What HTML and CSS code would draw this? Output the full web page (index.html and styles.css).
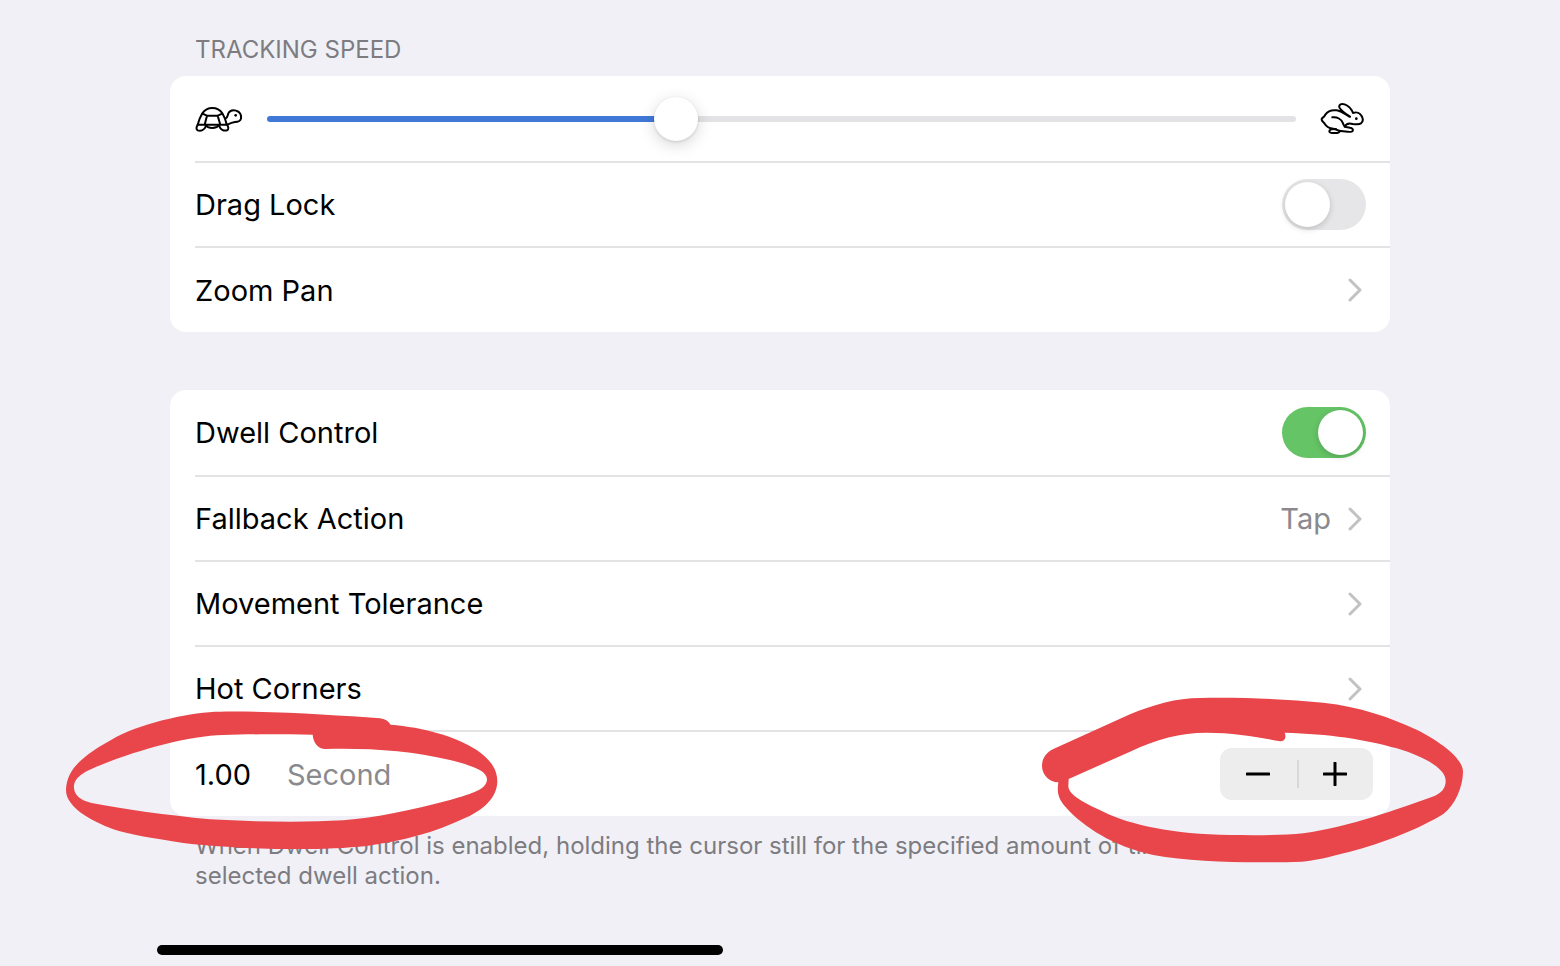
FILE: index.html
```html
<!DOCTYPE html>
<html lang="en">
<head>
    <meta charset="UTF-8" />
    <title>Tracking Speed</title>
    <link rel="stylesheet" href="styles.css">
</head>
<body>
<div id="settings">
    <h2>TRACKING SPEED</h2>
    <div class="group">
        <div class="row speed">
            <svg class="turtle" viewBox="48 45 144 84" aria-hidden="true">
                <path d="M56 104C60 90 64 80 70 70C78 58 88 54 100 54C113 54 123 59 130 70C136 80 140 90 143 103M60 104L140 104M70 71L84 77L116 77L130 71M84 77L77 104M116 77L124 104M77 104C84 112 92 114 100 114C110 114 117 111 124 104"/>
                <path d="M139 86C147 82 146 76 148 70C152 62 162 59 172 62C183 65 188 76 186 86C184 95 176 96 168 96C160 97 153 100 145 104"/>
                <path d="M57 103C51 112 51 118 56 121C66 124 76 120 80 110M122 110C124 118 134 124 144 121C150 118 149 110 143 104"/>
                <circle class="eye" cx="170" cy="76" r="4"/>
            </svg>
            <input type="range" min="0" max="1000" value="393" aria-label="Tracking speed">
            <svg class="rabbit" viewBox="60 38 132 99" aria-hidden="true">
                <path d="M150 82C138 74 122 62 118 54C116 45 124 42 134 45C147 50 155 60 159 71C170 67 180 71 184 79C190 88 189 97 183 102C176 107 166 104 158 104C148 101 138 104 134 112L150 115C157 116 160 120 158 125C156 128 150 128 144 127L122 125C112 124 108 120 100 118C88 117 78 110 74 103C70 98 64 96 65 89C67 84 73 84 76 76C84 64 96 61 110 63C124 65 134 74 148 82"/>
                <path d="M97 84C112 82 124 90 128 100C130 106 132 109 134 111M108 119C96 119 88 121 88 126C89 133 104 131 112 131C116 130 118 128 121 125"/>
                <circle class="eye" cx="169" cy="88" r="4"/>
            </svg>
        </div>
        <div class="row">
            <label for="drag">Drag Lock</label>
            <input type="checkbox" class="switch" id="drag">
        </div>
        <a class="row" href="#">
            <span>Zoom Pan</span>
            <svg class="arrow" viewBox="0 0 14 24"><path d="M2 2L12 12L2 22"/></svg>
        </a>
    </div>

    <div class="group">
        <div class="row">
            <label for="dwell">Dwell Control</label>
            <input type="checkbox" class="switch" id="dwell" checked>
        </div>
        <a class="row" href="#">
            <span>Fallback Action</span>
            <span class="value">Tap</span>
            <svg class="arrow" viewBox="0 0 14 24"><path d="M2 2L12 12L2 22"/></svg>
        </a>
        <a class="row" href="#">
            <span>Movement Tolerance</span>
            <svg class="arrow" viewBox="0 0 14 24"><path d="M2 2L12 12L2 22"/></svg>
        </a>
        <a class="row" href="#">
            <span>Hot Corners</span>
            <svg class="arrow" viewBox="0 0 14 24"><path d="M2 2L12 12L2 22"/></svg>
        </a>
        <div class="row seconds">
            <input type="text" class="time" id="time" value="1.00">
            <label class="unit" for="time">Second</label>
            <div class="stepper">
                <button type="button" aria-label="Less"><svg viewBox="0 0 24 24"><path d="M1 12H23"/></svg></button>
                <button type="button" aria-label="More"><svg viewBox="0 0 24 24"><path d="M1 12H23M12 1V23"/></svg></button>
            </div>
            <!-- red marker rings -->
            <svg class="ring ring_l" viewBox="30 45 1350 450" aria-hidden="true">
                <path d="M48 300C50 235 100 195 200 140C290 95 430 65 510 65C680 63 860 76 990 85Q1012 88 1022 104C1120 112 1215 138 1280 180C1325 212 1342 240 1342 275C1340 325 1300 358 1250 382C1150 430 1060 452 950 468C800 484 560 478 400 459C310 445 240 435 190 418C120 390 80 365 60 335Q48 320 48 300Z
                M72 292C72 262 100 245 160 222C270 178 420 137 520 135C600 132 700 133 788 134C790 160 805 176 826 177C960 174 1080 182 1200 210C1280 230 1310 245 1311 268C1310 298 1270 310 1200 330C1080 362 980 382 880 391C760 398 600 395 480 388C350 375 220 358 125 339C90 332 72 314 72 292Z"/>
            </svg>
            <svg class="ring ring_r" viewBox="15 39 1350 525" aria-hidden="true">
                <path d="M36 258C36 235 48 218 70 207L300 103C370 74 440 54 510 54C640 52 760 57 880 68C990 80 1080 112 1160 149C1230 184 1299 235 1299 275C1299 320 1275 375 1240 402C1170 445 1060 490 960 515C900 530 850 543 815 545C680 549 500 549 370 525C250 500 160 440 110 385C82 355 81 335 85 307C58 307 36 285 36 258Z
                M116 297L300 215C380 177 450 158 530 158C610 158 690 172 750 184C764 184 770 172 764 158C900 162 1000 177 1100 205C1190 232 1247 268 1247 302C1247 325 1235 340 1205 351C1110 385 960 440 820 460C760 466 680 466 600 465C430 462 300 435 220 395C165 370 115 345 115 318Z"/>
            </svg>
        </div>
    </div>
    <p class="note">When Dwell Control is enabled, holding the cursor still for the specified amount of time performs the selected dwell action.</p>
</div>
<div class="home"></div>
</body>
</html>
```

FILE: styles.css
```css
*{
    box-sizing:border-box;
}
body{
    margin:0;
    background:#f1f0f6;
    color:#000;
    font-family:Inter,"Liberation Sans",sans-serif;
    font-size:29px;
    overflow-x:hidden;
}
#settings{
    max-width:1220px;
    margin:0 auto;
    padding-top:35px;
}
h2{
    margin:0 25px 11px;
    font-size:24px;
    line-height:30px;
    font-weight:400;
    color:#7c7c81;
}
.group{
    margin-bottom:58px;
    background:#fff;
    border-radius:16px;
}
.row{
    display:flex;
    align-items:center;
    height:85px;
    margin-left:25px;
    padding-right:24px;
    color:#000;
    text-decoration:none;
}
.row + .row{
    border-top:2px solid #e3e3e5;
}
.row:last-child{
    height:86px;
}
a.row{
    padding-right:28px;
}

.speed{
    padding-right:26px;
}
.speed svg{
    flex:none;
    fill:none;
    stroke:#000;
    stroke-width:6;
    stroke-linecap:round;
    stroke-linejoin:round;
}
.speed .eye{
    fill:#000;
    stroke:none;
}
.turtle{
    width:48px;
    height:28px;
}
.rabbit{
    width:44px;
    height:33px;
}
input[type=range]{
    appearance:none;
    flex:1;
    min-width:0;
    height:46px;
    margin:0 24px;
    background:none;
}
input[type=range]::-webkit-slider-runnable-track{
    height:6px;
    border-radius:3px;
    background:linear-gradient(to right,#4078d8 40%,#e3e3e5 40%);
}
input[type=range]::-webkit-slider-thumb{
    appearance:none;
    width:44px;
    height:44px;
    margin-top:-19px;
    border-radius:50%;
    background:#fff;
    box-shadow:0 1px 3px rgba(0,0,0,.12),0 4px 16px rgba(0,0,0,.16);
}

.switch{
    appearance:none;
    width:84px;
    height:51px;
    margin:0 0 0 auto;
    padding:3px;
    border-radius:26px;
    background:#e6e6e8;
}
.switch:before{
    content:"";
    display:block;
    width:45px;
    height:45px;
    border-radius:50%;
    background:#fff;
    box-shadow:0 2px 6px rgba(0,0,0,.18);
}
.switch:checked{
    background:#65c466;
}
.switch:checked:before{
    margin-left:auto;
}

.arrow{
    width:14px;
    height:24px;
    margin-left:auto;
    fill:none;
    stroke:#c2c2c5;
    stroke-width:3;
    stroke-linecap:round;
    stroke-linejoin:round;
}
.value{
    margin-left:auto;
    color:#8a8a8e;
}
.value + .arrow{
    margin-left:17px;
}

.seconds{
    position:relative;
    padding-right:17px;
}
.time{
    width:92px;
    padding:0;
    border:0;
    background:none;
    color:#000;
    font:inherit;
}
.unit{
    color:#8a8a8e;
}
.stepper{
    display:flex;
    width:153px;
    height:52px;
    margin-left:auto;
    border-radius:12px;
    background:#ededee;
}
.stepper button{
    display:flex;
    flex:1;
    align-items:center;
    justify-content:center;
    padding:0;
    border:0;
    background:none;
}
.stepper button + button{
    background:linear-gradient(#d8d8da,#d8d8da) no-repeat left center / 2px 28px;
}
.stepper svg{
    width:24px;
    height:24px;
    stroke:#000;
    stroke-width:3;
    stroke-linecap:round;
}
.ring{
    position:absolute;
    fill:#e8464a;
    fill-rule:evenodd;
    pointer-events:none;
}
.ring_l{
    top:-27px;
    left:-135px;
    width:450px;
    height:150px;
}
.ring_r{
    top:-39px;
    right:-95px;
    width:450px;
    height:175px;
}

.note{
    margin:-43px 25px 0;
    font-size:24px;
    line-height:30px;
    color:#7c7c81;
}
.home{
    width:566px;
    height:10px;
    margin:54px 0 11px 157px;
    border-radius:5px;
    background:#000;
}
```
